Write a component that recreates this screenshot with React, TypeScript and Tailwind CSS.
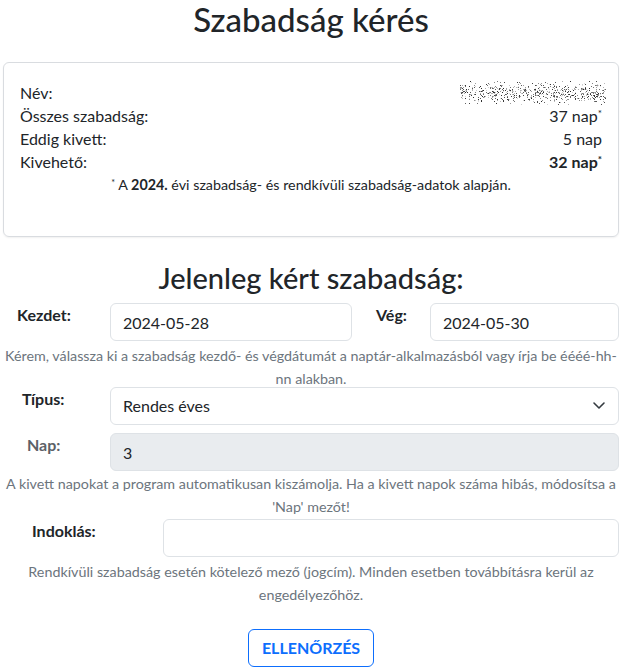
import React from "react";

const font = "font-['Lato','Noto_Sans',sans-serif]";

// pixel noise standing in for the blurred name
function NameBlur() {
  let s = 987654;
  const rnd = () => {
    s = (s * 1103515245 + 12345) & 0x7fffffff;
    return s / 0x7fffffff;
  };
  const dots: { x: number; y: number; c: string }[] = [];
  for (let i = 0; i < 700; i++) {
    const x = Math.floor(rnd() * 146);
    const y = Math.floor(12 + (rnd() + rnd() + rnd() - 1.5) * 11);
    const g = Math.floor(40 + rnd() * 190);
    dots.push({ x, y, c: `rgb(${g},${g},${g})` });
  }
  return (
    <svg width="146" height="24" viewBox="0 0 146 24" className="block">
      {dots.map((d, i) => (
        <rect key={i} x={d.x} y={d.y} width="1" height="1" fill={d.c} />
      ))}
    </svg>
  );
}

function Row({ label, children }: { label: string; children: React.ReactNode }) {
  return (
    <div className="flex h-[23px] items-center justify-between leading-[23px]">
      <span>{label}</span>
      <span>{children}</span>
    </div>
  );
}

const inputCls =
  "h-[38px] rounded-[6px] border border-[#dee2e6] px-[12px] text-[16px] leading-[24px] text-[#212529] outline-none";

export default function App() {
  return (
    <div className={`min-h-[672px] w-full bg-white text-[#212529] ${font}`}>
      <h1 className="text-center text-[33px] font-medium leading-[38px]">Szabadság kérés</h1>

      <div className="mx-[3px] mt-[24px] rounded-[6px] border border-[#d9dce0] px-[16px] pt-[18px] pb-[40px] text-[16px] shadow-[0_1px_2px_rgba(0,0,0,0.06)]">
        <div className="flex h-[23px] items-center justify-between">
          <span>Név:</span>
          <span className="-mr-[4px]">
            <NameBlur />
          </span>
        </div>
        <Row label="Összes szabadság:">
          37 nap<sup className="text-[10px]">*</sup>
        </Row>
        <Row label="Eddig kivett:">5 nap</Row>
        <Row label="Kivehető:">
          <b>32 nap</b>
          <sup className="text-[10px] font-bold">*</sup>
        </Row>
        <p className="text-center text-[14.3px] leading-[23px]">
          <sup className="text-[9px]">*</sup> A <b>2024.</b> évi szabadság- és rendkívüli szabadság-adatok alapján.
        </p>
      </div>

      <h2 className="mt-[24px] text-center text-[29px] font-medium leading-[34px]">Jelenleg kért szabadság:</h2>

      <div className="mt-[8px] flex items-start">
        <label className="w-[110px] pl-[17px] text-[16px] font-bold leading-[24px]">Kezdet:</label>
        <input className={`${inputCls} w-[242px] bg-white`} defaultValue="2024-05-28" />
        <label className="w-[78px] pl-[24px] text-[16px] font-bold leading-[24px]">Vég:</label>
        <input className={`${inputCls} w-[189px] bg-white`} defaultValue="2024-05-30" />
      </div>
      <p className="mt-[3px] -mb-[3px] px-[3px] text-center text-[14.3px] leading-[23px] text-[#6c757d]">
        Kérem, válassza ki a szabadság kezdő- és végdátumát a naptár-alkalmazásból vagy írja be éééé-hh-
        <br />
        nn alakban.
      </p>

      <div className="flex items-start">
        <label className="w-[110px] pl-[22px] text-[16px] font-bold leading-[24px]">Típus:</label>
        <div className="relative w-[509px]">
          <select className={`${inputCls} w-full appearance-none bg-white`} defaultValue="rendes">
            <option value="rendes">Rendes éves</option>
          </select>
          <svg
            className="pointer-events-none absolute right-[12px] top-[13px]"
            width="16"
            height="12"
            viewBox="0 0 16 12"
          >
            <path d="m3 3 5 5 5-5" fill="none" stroke="#343a40" strokeWidth="1.6" strokeLinecap="round" strokeLinejoin="round" />
          </svg>
        </div>
      </div>

      <div className="mt-[8px] flex items-start">
        <label className="w-[110px] pl-[27px] text-[16px] font-bold leading-[24px] text-[#5c6167]">Nap:</label>
        <input className={`${inputCls} w-[509px] bg-[#e9ecef]`} defaultValue="3" disabled />
      </div>
      <p className="mt-[1px] px-[3px] text-center text-[14.3px] leading-[23px] text-[#6c757d]">
        A kivett napokat a program automatikusan kiszámolja. Ha a kivett napok száma hibás, módosítsa a
        <br />
        'Nap' mezőt!
      </p>

      <div className="mt-[1px] flex items-start">
        <label className="w-[163px] pl-[32px] text-[16px] font-bold leading-[24px]">Indoklás:</label>
        <input className={`${inputCls} w-[456px] bg-white`} />
      </div>
      <p className="mt-[3px] px-[3px] text-center text-[14.3px] leading-[23px] text-[#6c757d]">
        Rendkívüli szabadság esetén kötelező mező (jogcím). Minden esetben továbbításra kerül az
        <br />
        engedélyezőhöz.
      </p>

      <div className="mt-[23px] flex justify-center">
        <button className="h-[38px] rounded-[6px] border border-[#0d6efd] px-[13px] text-[16px] font-bold text-[#0d6efd]">
          ELLENŐRZÉS
        </button>
      </div>
    </div>
  );
}
